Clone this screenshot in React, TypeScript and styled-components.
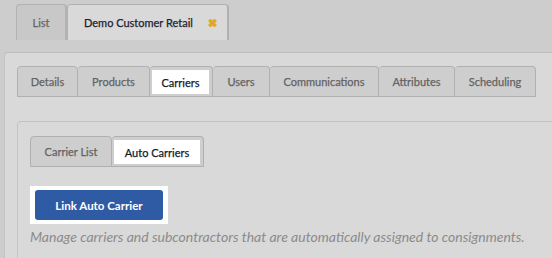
import React from "react";
import styled, { createGlobalStyle } from "styled-components";

const Global = createGlobalStyle`
  html, body { margin: 0; padding: 0; background: #cdcdcd; }
  body { font-family: Lato, "Open Sans", sans-serif; overflow: hidden; }
  * { box-sizing: border-box; }
`;

const Page = styled.div`
  width: 552px;
  height: 258px;
  overflow: hidden;
  background: #cdcdcd;
`;

const TopBar = styled.div`
  display: flex;
  align-items: flex-end;
  height: 52px;
  padding: 4px 0 12px 16px;
`;

const TopTab = styled.div<{ $active?: boolean }>`
  display: flex;
  align-items: center;
  justify-content: ${(p) => (p.$active ? "flex-start" : "center")};
  gap: 15px;
  height: 36px;
  width: ${(p) => (p.$active ? "162px" : "51px")};
  padding: 0 0 0 ${(p) => (p.$active ? "16px" : "0")};
  border: 1px solid #b2b2b2;
  border-bottom: none;
  border-right: 2px solid #b2b2b2;
  border-radius: 4px 4px 0 0;
  background: ${(p) => (p.$active ? "#d9d9d9" : "#c8c8c8")};
  color: ${(p) => (p.$active ? "#1f2230" : "#666666")};
  font-size: 11px;
  -webkit-text-stroke: 0.25px currentColor;
  white-space: nowrap;
`;

const Close = styled.span`
  color: #e0a823;
  font-size: 11px;
  font-weight: 900;
  line-height: 1;
`;

const Panel = styled.div`
  margin-left: 4px;
  height: 206px;
  background: #d9d9d9;
  border-top: 1px solid #bdbdbd;
  border-left: 1px solid #c3c3c3;
  border-top-left-radius: 4px;
  padding: 13px 0 0 12px;
`;

const TabRow = styled.div`
  display: flex;
  height: 31px;
`;

const Tab = styled.div<{ $active?: boolean; $first?: boolean; $w: number }>`
  display: flex;
  align-items: stretch;
  width: ${(p) => p.$w}px;
  height: 31px;
  border: 1px solid #b0b0b0;
  border-left-width: ${(p) => (p.$first ? 1 : 0)}px;
  border-radius: 4px 4px 0 0;
  background: #cecece;
  padding: ${(p) => (p.$active ? "3px 3px 2px 2px" : "0")};
  font-size: 11px;
  -webkit-text-stroke: 0.25px currentColor;
  color: ${(p) => (p.$active ? "#141a2c" : "#636363")};
  white-space: nowrap;
`;

const TabLabel = styled.span<{ $active?: boolean }>`
  flex: 1;
  display: flex;
  align-items: center;
  justify-content: center;
  background: ${(p) => (p.$active ? "#ffffff" : "transparent")};
`;

const Inner = styled.div`
  margin-top: 24px;
  height: 140px;
  border-top: 1px solid #c2c2c2;
  border-left: 1px solid #c6c6c6;
  border-top-left-radius: 4px;
  padding: 14px 0 0 12px;
`;

const ButtonHalo = styled.div`
  margin-top: 19px;
  display: inline-flex;
  padding: 4px 5px;
  background: #ffffff;
`;

const Button = styled.button`
  width: 128px;
  height: 30px;
  border: none;
  border-radius: 3px;
  background: #2f5ba5;
  color: #ffffff;
  font-family: Lato, sans-serif;
  font-weight: 700;
  font-size: 11.5px;
  padding: 0;
`;

const Help = styled.p`
  margin: 4px 0 0 0;
  font-style: italic;
  font-size: 14px;
  color: #8b8b8b;
  white-space: nowrap;
`;

const mainTabs: [string, number][] = [
  ["Details", 61],
  ["Products", 72],
  ["Carriers", 63],
  ["Users", 57],
  ["Communications", 109],
  ["Attributes", 76],
  ["Scheduling", 81],
];

const subTabs: [string, number][] = [
  ["Carrier List", 82],
  ["Auto Carriers", 92],
];

export default function App() {
  return (
    <Page>
      <Global />
      <TopBar>
        <TopTab>List</TopTab>
        <TopTab $active>
          Demo Customer Retail <Close>✖</Close>
        </TopTab>
      </TopBar>
      <Panel>
        <TabRow>
          {mainTabs.map(([t, w], i) => (
            <Tab key={t} $w={w} $first={i === 0} $active={t === "Carriers"}>
              <TabLabel $active={t === "Carriers"}>{t}</TabLabel>
            </Tab>
          ))}
        </TabRow>
        <Inner>
          <TabRow>
            {subTabs.map(([t, w], i) => (
              <Tab key={t} $w={w} $first={i === 0} $active={t === "Auto Carriers"}>
                <TabLabel $active={t === "Auto Carriers"}>{t}</TabLabel>
              </Tab>
            ))}
          </TabRow>
          <ButtonHalo>
            <Button>Link Auto Carrier</Button>
          </ButtonHalo>
          <Help>
            Manage carriers and subcontractors that are automatically assigned to consignments.
          </Help>
        </Inner>
      </Panel>
    </Page>
  );
}
